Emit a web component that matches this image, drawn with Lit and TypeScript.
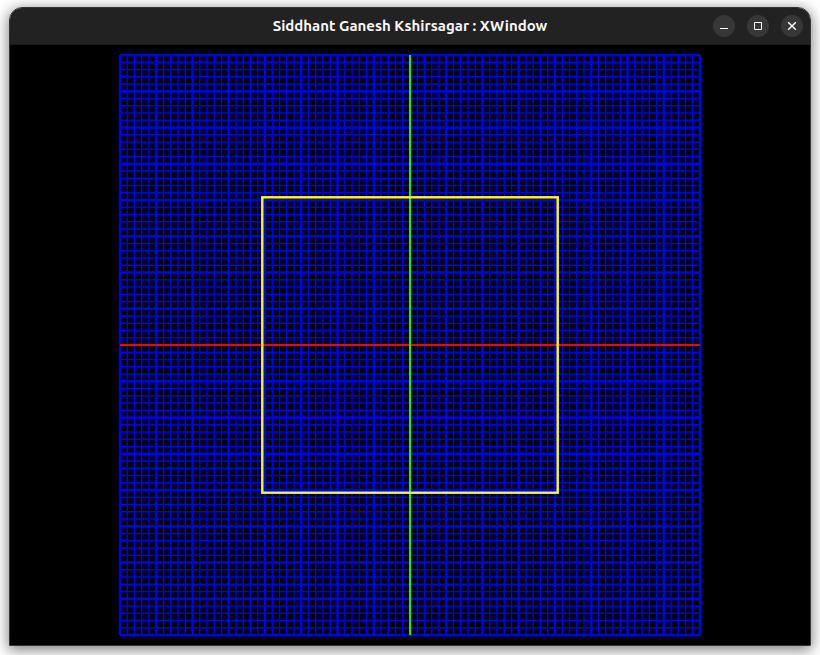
import { LitElement, html, css, svg } from "lit";
import { customElement, property } from "lit/decorators.js";

const HALF = 290;
const CELLS = 40;
const MAJOR_EVERY = 5;

@customElement("graph-paper")
class GraphPaper extends LitElement {
  static styles = css`
    :host {
      display: block;
      background: #000;
    }
    svg {
      display: block;
      width: 100%;
      height: auto;
    }
    .minor {
      stroke: #00f;
      stroke-width: 1.35;
    }
    .major {
      stroke: #00f;
      stroke-width: 2.3;
    }
    .x-axis {
      stroke: #f00;
      stroke-width: 2;
    }
    .y-axis {
      stroke: #0f0;
      stroke-width: 2;
    }
    .square {
      fill: none;
      stroke: #ff0;
      stroke-width: 2.4;
    }
  `;

  private gridLines(major: boolean) {
    const lines = [];
    for (let i = -CELLS; i <= CELLS; i++) {
      if (i === 0 || (i % MAJOR_EVERY === 0) !== major) continue;
      const p = (i * HALF) / CELLS;
      const cls = major ? "major" : "minor";
      lines.push(svg`
        <line class=${cls} x1=${p} y1=${-HALF} x2=${p} y2=${HALF}></line>
        <line class=${cls} x1=${-HALF} y1=${p} x2=${HALF} y2=${p}></line>`);
    }
    return lines;
  }

  render() {
    return html`
      <svg viewBox="-400 -300 800 600" role="img" aria-label="Graph paper with a square">
        ${this.gridLines(false)} ${this.gridLines(true)}
        <line class="x-axis" x1=${-HALF} y1="0" x2=${HALF} y2="0"></line>
        <line class="y-axis" x1="0" y1=${-HALF} x2="0" y2=${HALF}></line>
        <rect class="square" x="-147.7" y="-147.7" width="295.4" height="295.4"></rect>
      </svg>
    `;
  }
}

@customElement("title-bar")
class TitleBar extends LitElement {
  @property() heading = "";

  static styles = css`
    :host {
      display: grid;
      grid-template-columns: 1fr auto 1fr;
      align-items: center;
      height: 36px;
      padding: 0 7px;
      background: #222;
      border-bottom: 1px solid #1a1a1a;
    }
    h1 {
      grid-column: 2;
      margin: 0;
      color: #f7f7f7;
      font: 700 15px/22px Ubuntu, "Noto Sans", sans-serif;
      white-space: nowrap;
    }
    .controls {
      display: flex;
      justify-content: flex-end;
      gap: 12px;
    }
    button {
      width: 22px;
      height: 22px;
      padding: 0;
      border: 0;
      border-radius: 50%;
      background: #373737;
      color: #fff;
    }
    svg {
      display: block;
      width: 22px;
      height: 22px;
      fill: none;
      stroke: currentColor;
    }
    .cross {
      stroke-width: 1.4;
    }
  `;

  render() {
    return html`
      <h1>${this.heading}</h1>
      <div class="controls">
        <button aria-label="Minimize">
          <svg viewBox="0 0 22 22"><path d="M7 13.5H15"></path></svg>
        </button>
        <button aria-label="Maximize">
          <svg viewBox="0 0 22 22"><path d="M7.5 7.5H14.5V14.5H7.5Z"></path></svg>
        </button>
        <button aria-label="Close">
          <svg class="cross" viewBox="0 0 22 22"><path d="M7.2 7.2L14.8 14.8M14.8 7.2L7.2 14.8"></path></svg>
        </button>
      </div>
    `;
  }
}

@customElement("app-root")
class AppRoot extends LitElement {
  static styles = css`
    :host {
      display: block;
      padding: 7px 9px 9px;
      background: #fff;
      overflow: hidden;
    }
    .window {
      border: 1px solid #353535;
      border-radius: 13px 13px 0 0;
      overflow: hidden;
      box-shadow: 0 3px 14px 1px rgba(0, 0, 0, 0.5);
    }
  `;

  render() {
    return html`
      <main class="window">
        <title-bar heading="Siddhant Ganesh Kshirsagar : XWindow"></title-bar>
        <graph-paper></graph-paper>
      </main>
    `;
  }
}
